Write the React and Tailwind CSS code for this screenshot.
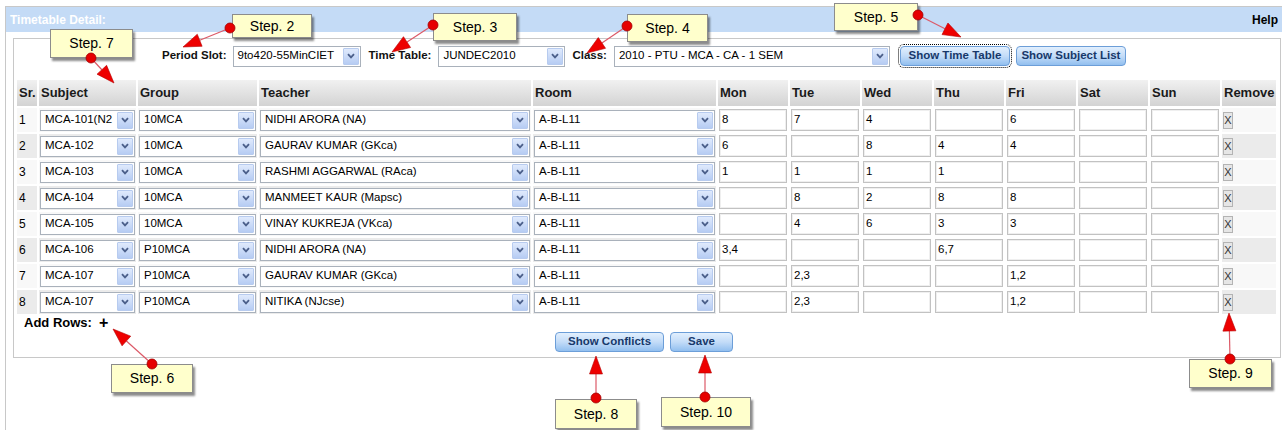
import React from 'react'

const rows = [
  ['MCA-101(N2', '10MCA', 'NIDHI ARORA (NA)', 'A-B-L11', ['8', '7', '4', '', '6', '', '']],
  ['MCA-102', '10MCA', 'GAURAV KUMAR (GKca)', 'A-B-L11', ['6', '', '8', '4', '4', '', '']],
  ['MCA-103', '10MCA', 'RASHMI AGGARWAL (RAca)', 'A-B-L11', ['1', '1', '1', '1', '', '', '']],
  ['MCA-104', '10MCA', 'MANMEET KAUR (Mapsc)', 'A-B-L11', ['', '8', '2', '8', '8', '', '']],
  ['MCA-105', '10MCA', 'VINAY KUKREJA (VKca)', 'A-B-L11', ['', '4', '6', '3', '3', '', '']],
  ['MCA-106', 'P10MCA', 'NIDHI ARORA (NA)', 'A-B-L11', ['3,4', '', '', '6,7', '', '', '']],
  ['MCA-107', 'P10MCA', 'GAURAV KUMAR (GKca)', 'A-B-L11', ['', '2,3', '', '', '1,2', '', '']],
  ['MCA-107', 'P10MCA', 'NITIKA (NJcse)', 'A-B-L11', ['', '2,3', '', '', '1,2', '', '']],
]

const heads = ['Sr.', 'Subject', 'Group', 'Teacher', 'Room', 'Mon', 'Tue', 'Wed', 'Thu', 'Fri', 'Sat', 'Sun', 'Remove']

function Chevron() {
  return (
    <svg width="8" height="6" viewBox="0 0 8 6">
      <path d="M1 1.2 L4 4.4 L7 1.2" stroke="#4b5f8a" strokeWidth="1.8" fill="none" />
    </svg>
  )
}

function Select({ value, className = 'w-full' }) {
  return (
    <div className={`flex h-[21px] items-center border border-[#a9b1bb] bg-white ${className}`}>
      <span className="flex-1 overflow-hidden whitespace-nowrap pl-[4px] text-[11.5px] font-normal leading-none text-black">{value}</span>
      <span className="mr-px flex h-[17px] w-[16px] items-center justify-center rounded-[1px] border border-[#b7cbef] bg-gradient-to-b from-[#e0eafc] to-[#b6ccf3]">
        <Chevron />
      </span>
    </div>
  )
}

function Button({ children, className = '' }) {
  return (
    <button className={`h-[20px] rounded-[4px] border border-[#6c9ed8] bg-gradient-to-b from-[#e2effd] via-[#c3dcf8] to-[#92bfef] text-[11.5px] font-bold leading-none text-[#17386a] ${className}`}>
      {children}
    </button>
  )
}

function Arrow({ x1, y1, x2, y2 }) {
  const dx = x2 - x1
  const dy = y2 - y1
  const len = Math.hypot(dx, dy)
  const ux = dx / len
  const uy = dy / len
  const hl = 18
  const hw = 6.5
  const bx = x2 - ux * hl
  const by = y2 - uy * hl
  const px = -uy * hw
  const py = ux * hw
  return (
    <g>
      <line x1={x1} y1={y1} x2={bx} y2={by} stroke="#dc5a68" strokeWidth="1.2" />
      <polygon points={`${x2},${y2} ${bx + px},${by + py} ${bx - px},${by - py}`} fill="#ee0000" stroke="#b30000" strokeWidth="0.6" />
      <circle cx={x1} cy={y1} r="5" fill="#e60000" stroke="#a00000" strokeWidth="0.8" />
    </g>
  )
}

function Callout({ className, children }) {
  return (
    <div className={`absolute flex items-center justify-center border border-[#8c8c8c] bg-[#ffffcc] text-[14px] text-black shadow-[2px_3px_2px_rgba(0,0,0,0.45)] ${className}`}>
      {children}
    </div>
  )
}

export default function App() {
  return (
    <div className="relative h-[430px] w-full overflow-hidden bg-white font-['Liberation_Sans',Arial,sans-serif]">
      <div className="ml-[5px] mt-[6px] min-h-[424px] border-l border-t border-[#c8c8c8]">
        <div className="flex h-[25px] items-center justify-between bg-[#c4dbf6] pl-[4px] pr-[4px]">
          <span className="text-[12px] font-bold text-white">Timetable Detail:</span>
          <span className="text-[12px] font-bold text-black">Help</span>
        </div>

        <div className="ml-[7px] mr-px mt-[6px] border border-[#c8c8c8] pb-[5px]">
          <div className="mt-[6px] flex h-[22px] items-center pl-[148px] text-[11.5px] font-bold text-[#111]">
            <span>Period Slot:</span>
            <Select value="9to420-55MinCIET" className="ml-[6px] w-[128px]" />
            <span className="ml-[8px]">Time Table:</span>
            <Select value="JUNDEC2010" className="ml-[7px] w-[127px]" />
            <span className="ml-[7px]">Class:</span>
            <Select value="2010 - PTU - MCA - CA - 1 SEM" className="ml-[7px] w-[276px]" />
            <Button className="ml-[10px] w-[110px] outline-1 outline-offset-1 outline-dotted outline-black">Show Time Table</Button>
            <Button className="ml-[6px] w-[110px]">Show Subject List</Button>
          </div>

          <div className="ml-[3px] mt-[13px] grid grid-cols-[20px_97px_119px_272px_183px_70px_70px_70px_70px_70px_70px_70px_54px] grid-rows-[26px_repeat(8,24px)] gap-[2px]">
            {heads.map((h) => (
              <div key={h} className="flex items-center bg-gradient-to-b from-[#f1f1f1] to-[#d3d3d3] pl-[2px] text-[13px] font-bold text-[#1a1a1a]">
                {h}
              </div>
            ))}
            {rows.map((r, i) => {
              const bg = i % 2 === 0 ? 'bg-[#f8f8f8]' : 'bg-[#ebebeb]'
              return (
                <React.Fragment key={i}>
                  <div className={`flex items-center pl-[2px] text-[12px] ${bg}`}>{i + 1}</div>
                  {r.slice(0, 4).map((v, j) => (
                    <div key={j} className={`flex items-center px-px ${bg}`}>
                      <Select value={v} />
                    </div>
                  ))}
                  {r[4].map((v, j) => (
                    <div key={'d' + j} className="flex items-center px-px">
                      <div className="flex h-[22px] w-full items-center border border-[#c2c2c2] bg-white pl-[2px] text-[11.5px] shadow-[inset_0_0_0_1px_#efefef]">
                        {v}
                      </div>
                    </div>
                  ))}
                  <div className={`flex items-center pl-px ${bg}`}>
                    <span className="flex h-[17px] w-[10px] items-center justify-center border border-[#b3b3b3] bg-[#e6e6e6] text-[11px] font-light text-[#333]">X</span>
                  </div>
                </React.Fragment>
              )
            })}
          </div>

          <div className="mt-px flex h-[16px] items-center pl-[10px] font-bold text-black">
            <span className="text-[13px]">Add Rows:</span>
            <span className="ml-[7px] text-[16px]">+</span>
          </div>

          <div className="mt-px flex pl-[541px]">
            <Button className="w-[109px]">Show Conflicts</Button>
            <Button className="ml-[6px] w-[63px]">Save</Button>
          </div>
        </div>
      </div>

      <Callout className="left-[232px] top-[14px] h-[24px] w-[80px]">Step. 2</Callout>
      <Callout className="left-[433px] top-[13px] h-[28px] w-[84px]">Step. 3</Callout>
      <Callout className="left-[627px] top-[14px] h-[28px] w-[81px]">Step. 4</Callout>
      <Callout className="left-[834px] top-[3px] h-[28px] w-[84px]">Step. 5</Callout>
      <Callout className="left-[50px] top-[29px] h-[29px] w-[83px]">Step. 7</Callout>
      <Callout className="left-[111px] top-[364px] h-[29px] w-[82px]">Step. 6</Callout>
      <Callout className="left-[555px] top-[399px] h-[30px] w-[82px]">Step. 8</Callout>
      <Callout className="left-[661px] top-[397px] h-[30px] w-[90px]">Step. 10</Callout>
      <Callout className="left-[1189px] top-[359px] h-[29px] w-[83px]">Step. 9</Callout>

      <svg className="pointer-events-none absolute left-0 top-0" width="1282" height="430">
        <Arrow x1={230} y1={28} x2={183} y2={47} />
        <Arrow x1={433} y1={25} x2={392} y2={52} />
        <Arrow x1={627} y1={26} x2={587} y2={53} />
        <Arrow x1={918} y1={15} x2={961} y2={37} />
        <Arrow x1={91} y1={58} x2={114} y2={83} />
        <Arrow x1={152} y1={364} x2={113} y2={329} />
        <Arrow x1={596} y1={398} x2={596} y2={356} />
        <Arrow x1={705} y1={397} x2={705} y2={355} />
        <Arrow x1={1230} y1={359} x2={1229} y2={313} />
      </svg>
    </div>
  )
}
